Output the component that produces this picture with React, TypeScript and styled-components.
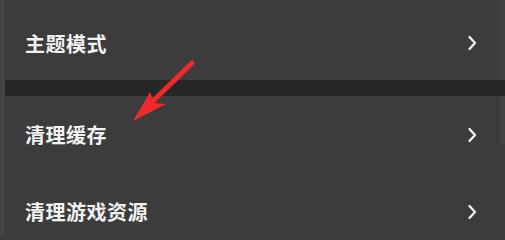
import React from 'react';
import styled, { createGlobalStyle } from 'styled-components';

const GlobalStyle = createGlobalStyle`
  html, body {
    margin: 0;
    padding: 0;
    background: #3c3c3c;
    overflow: hidden;
  }
  body {
    font-family: "Noto Sans CJK SC", "Noto Sans", sans-serif;
  }
`;

const Screen = styled.div`
  position: relative;
  width: 505px;
  height: 236px;
  display: flex;
  overflow: hidden;
  background: #3c3c3c;
`;

const EdgeStrip = styled.div`
  width: 5px;
  flex-shrink: 0;
  background: #444444;
`;

const Panel = styled.div`
  flex: 1;
  display: flex;
  flex-direction: column;
  & > * {
    flex-shrink: 0;
  }
`;

const Group = styled.div`
  background: #3c3c3c;
`;

const Separator = styled.div`
  height: 16px;
  background: #272727;
`;

const Row = styled.div<{ $first?: boolean }>`
  height: ${p => (p.$first ? 80 : 77)}px;
  padding-top: ${p => (p.$first ? 6 : 0)}px;
  box-sizing: border-box;
  display: flex;
  align-items: center;
  justify-content: space-between;
  padding-left: 20px;
  padding-right: 23px;
`;

const Label = styled.span`
  color: #f2f2f2;
  font-size: 20px;
  font-weight: 700;
  letter-spacing: 0.5px;
`;

const Scrollbar = styled.div`
  width: 5px;
  flex-shrink: 0;
  display: flex;
  flex-direction: column;
  & > * {
    flex-shrink: 0;
  }
`;

const ScrollTrack = styled.div<{ $h: number; $bg: string }>`
  height: ${p => p.$h}px;
  background: ${p => p.$bg};
`;

const Pointer = styled.svg`
  position: absolute;
  left: 0;
  top: 0;
  pointer-events: none;
`;

const Chevron = () => (
  <svg width="10" height="16" viewBox="0 0 10 16">
    <path
      d="M2.5 2 L8 8 L2.5 14"
      fill="none"
      stroke="#f4f4f4"
      strokeWidth="2.3"
      strokeLinecap="round"
      strokeLinejoin="round"
    />
  </svg>
);

const items = ['清理缓存', '清理游戏资源'];

export default function App() {
  return (
    <>
      <GlobalStyle />
      <Screen>
        <EdgeStrip />
        <Panel>
          <Group>
            <Row $first>
              <Label>主题模式</Label>
              <Chevron />
            </Row>
          </Group>
          <Separator />
          <Group>
            {items.map(text => (
              <Row key={text}>
                <Label>{text}</Label>
                <Chevron />
              </Row>
            ))}
          </Group>
        </Panel>
        <Scrollbar>
          <ScrollTrack $h={80} $bg="#414141" />
          <ScrollTrack $h={16} $bg="#272727" />
          <ScrollTrack $h={48} $bg="#444444" />
          <ScrollTrack $h={92} $bg="#3c3c3c" />
        </Scrollbar>
        <Pointer width="505" height="236" viewBox="0 0 505 236">
          <line
            x1="192"
            y1="63"
            x2="148"
            y2="106"
            stroke="#ee2a2a"
            strokeWidth="5"
            strokeLinecap="round"
          />
          <path d="M133 121 L150 92 L154 103 L166 104 Z" fill="#ee2a2a" />
        </Pointer>
      </Screen>
    </>
  );
}
